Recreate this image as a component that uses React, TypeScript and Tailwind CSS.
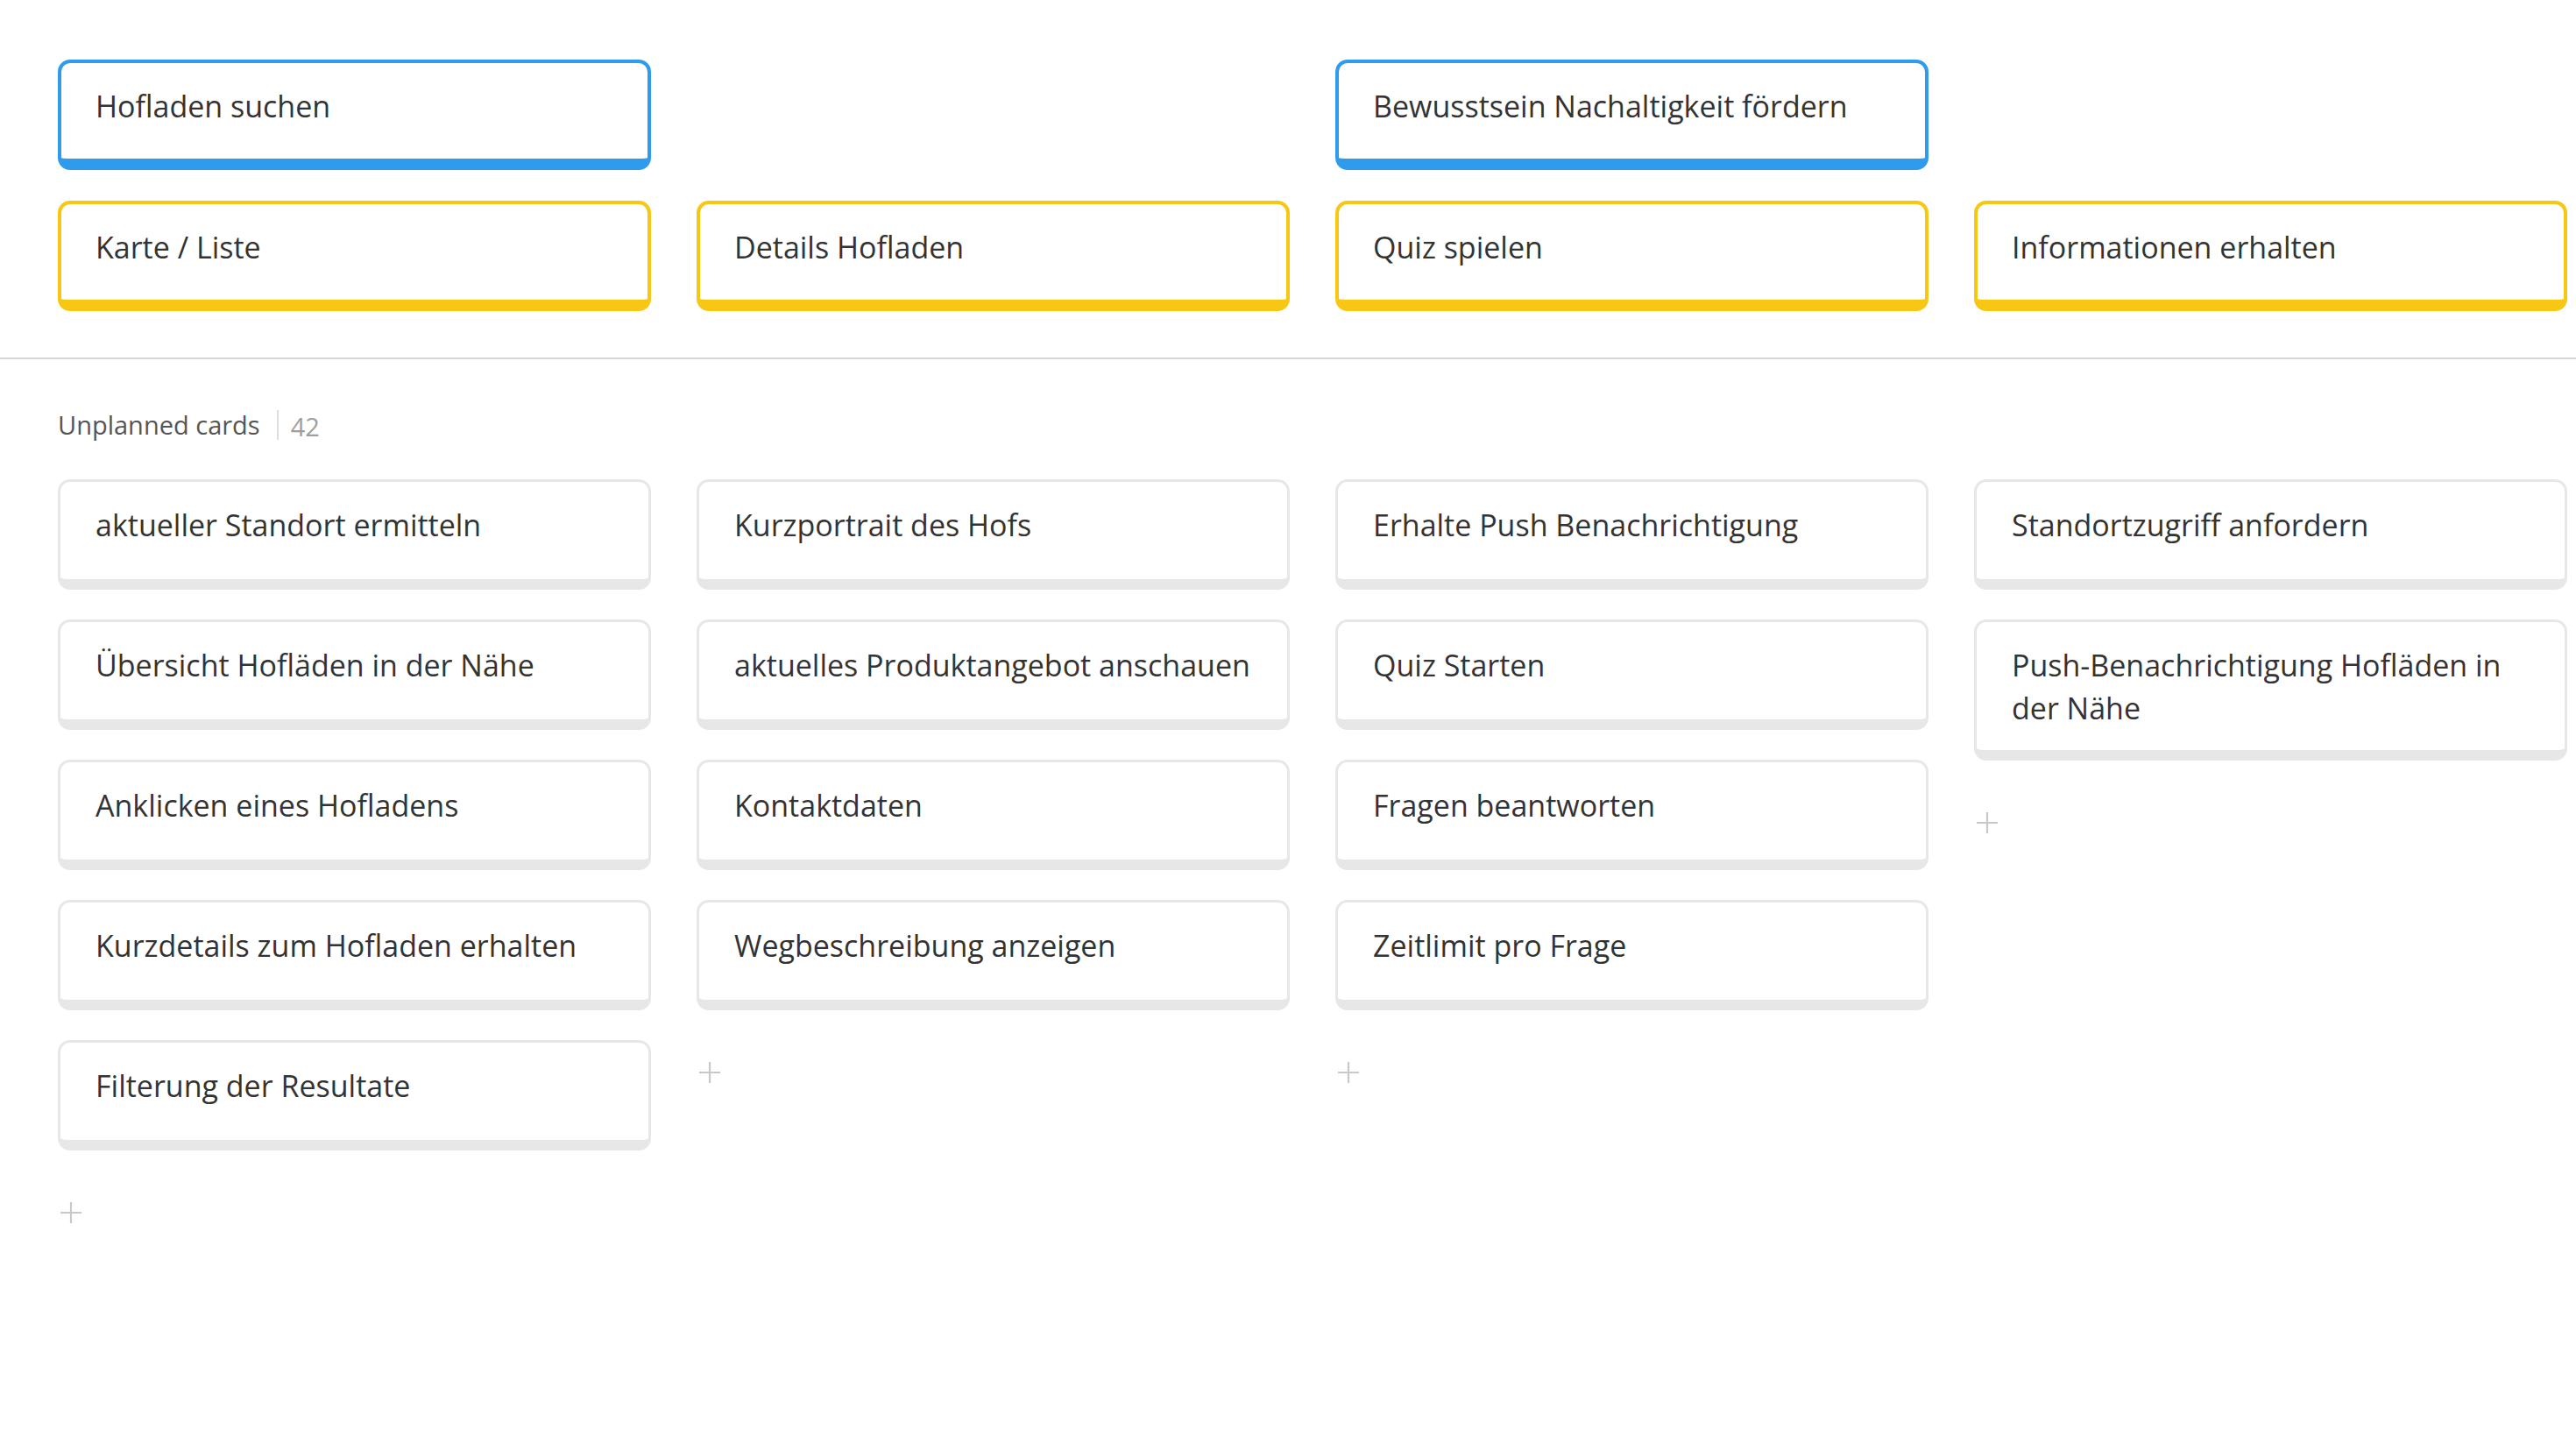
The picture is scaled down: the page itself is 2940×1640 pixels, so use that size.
import React from 'react'

type Tone = 'blue' | 'yellow'

const topRows: { tone: Tone; cells: (string | null)[] }[] = [
  { tone: 'blue', cells: ['Hofladen suchen', null, 'Bewusstsein Nachaltigkeit fördern', null] },
  { tone: 'yellow', cells: ['Karte / Liste', 'Details Hofladen', 'Quiz spielen', 'Informationen erhalten'] },
]

const columns: string[][] = [
  [
    'aktueller Standort ermitteln',
    'Übersicht Hofläden in der Nähe',
    'Anklicken eines Hofladens',
    'Kurzdetails zum Hofladen erhalten',
    'Filterung der Resultate',
  ],
  ['Kurzportrait des Hofs', 'aktuelles Produktangebot anschauen', 'Kontaktdaten', 'Wegbeschreibung anzeigen'],
  ['Erhalte Push Benachrichtigung', 'Quiz Starten', 'Fragen beantworten', 'Zeitlimit pro Frage'],
  ['Standortzugriff anfordern', 'Push-Benachrichtigung Hofläden in der Nähe'],
]

function StoryCard({ title, tone }: { title: string; tone: Tone }) {
  return (
    <div
      className={
        'min-h-[126px] rounded-[14px] border-[4px] border-b-[13px] bg-white pt-[25px] pb-[22px] pl-[39px] pr-[30px] ' +
        (tone === 'blue' ? 'border-[#2f9bec]' : 'border-[#f8c714]')
      }
    >
      <p className="text-[34px] leading-[49px] text-[#333]">{title}</p>
    </div>
  )
}

function TaskCard({ title }: { title: string }) {
  return (
    <div className="min-h-[126px] rounded-[14px] border-[3px] border-b-[12px] border-[#e7e7e7] bg-white pt-[25px] pb-[23px] pl-[40px] pr-[30px]">
      <p className="text-[34px] leading-[49px] text-[#333]">{title}</p>
    </div>
  )
}

function AddButton() {
  return (
    <button className="ml-[2px] mt-[24px] flex h-[26px] w-[26px] items-center justify-center">
      <svg width="26" height="26" viewBox="0 0 26 26">
        <path d="M13 1v24M1 13h24" stroke="#c8c8c8" strokeWidth="2.2" />
      </svg>
    </button>
  )
}

export default function App() {
  return (
    <div className="min-h-screen bg-white" style={{ fontFamily: '"Open Sans", "Noto Sans", sans-serif' }}>
      {/* story map backbone */}
      <div className="flex flex-col gap-y-[35px] pl-[66px] pt-[68px] pb-[53px]">
        {topRows.map((row, i) => (
          <div key={i} className="grid grid-cols-[repeat(4,677px)] gap-x-[52px]">
            {row.cells.map((c, j) => (c ? <StoryCard key={j} title={c} tone={row.tone} /> : <div key={j} />))}
          </div>
        ))}
      </div>

      <div className="h-[2px] w-full bg-[#d6d6d6]" />

      {/* unplanned */}
      <div className="pl-[66px] pt-[53px] pb-[200px]">
        <div className="flex items-center">
          <span className="text-[29px] leading-[40px] text-[#555]">Unplanned cards</span>
          <span className="ml-[19px] mr-[14px] h-[34px] w-[2px] bg-[#dedede]" />
          <span className="mt-[4px] text-[29px] leading-[40px] text-[#9e9e9e]">42</span>
        </div>

        <div className="mt-[40px] grid grid-cols-[repeat(4,677px)] items-start gap-x-[52px]">
          {columns.map((col, i) => (
            <div key={i} className="flex flex-col gap-y-[34px]">
              {col.map(t => (
                <TaskCard key={t} title={t} />
              ))}
              <AddButton />
            </div>
          ))}
        </div>
      </div>
    </div>
  )
}
